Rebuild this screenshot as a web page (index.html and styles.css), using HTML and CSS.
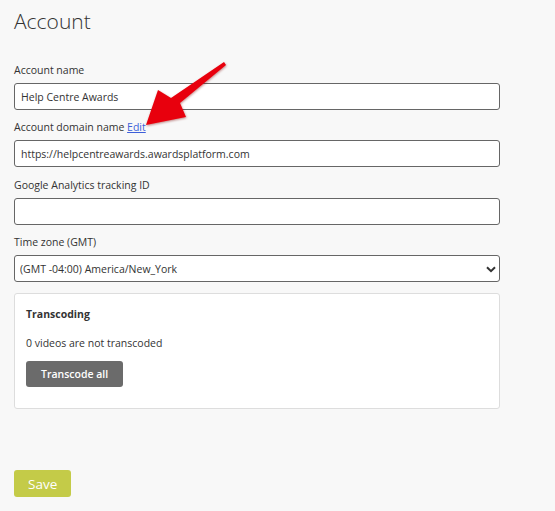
FILE: index.html
```html
<!DOCTYPE html>
<html lang="en">
<head>
  <meta charset="UTF-8" />
  <title>Account</title>
  <link rel="stylesheet" href="styles.css">
</head>
<body>
  <div class="page">
    <h1>Account</h1>

    <div class="field">
      <label for="accountName">Account name</label>
      <input id="accountName" type="text" value="Help Centre Awards">
    </div>

    <div class="field">
      <label for="domain">Account domain name <a href="#" class="edit-link">Edit</a></label>
      <input id="domain" type="text" value="https://helpcentreawards.awardsplatform.com">
    </div>

    <div class="field">
      <label for="ga">Google Analytics tracking ID</label>
      <input id="ga" type="text" value="">
    </div>

    <div class="field">
      <label for="tz">Time zone (GMT)</label>
      <div class="select-wrap">
        <select id="tz">
          <option>(GMT -04:00) America/New_York</option>
        </select>
        <svg class="chevron" width="10" height="7" viewBox="0 0 10 7">
          <path d="M1 1.2 L5 5.2 L9 1.2" fill="none" stroke="#333" stroke-width="2"/>
        </svg>
      </div>
    </div>

    <div class="panel">
      <div class="panel-title">Transcoding</div>
      <p class="panel-text">0 videos are not transcoded</p>
      <button class="btn-grey">Transcode all</button>
    </div>

    <button class="btn-save">Save</button>

    <!-- Pfeil aus dem Screenshot -->
    <svg class="arrow" width="555" height="200" viewBox="0 0 555 200">
      <defs>
        <filter id="shade" x="-20%" y="-20%" width="140%" height="140%">
          <feDropShadow dx="0.5" dy="1" stdDeviation="0.8" flood-color="#700" flood-opacity="0.45"/>
        </filter>
      </defs>
      <polygon points="224,62 226,65 180,103 186,117 146,125 158,90 171,98" fill="#e8060c" filter="url(#shade)"/>
    </svg>
  </div>
</body>
</html>
```

FILE: styles.css
```css
body {
  margin: 0;
  background: #f8f8f8;
  font-family: "Open Sans", "Liberation Sans", sans-serif;
  color: #333;
}

.page {
  position: relative;
  padding: 6px 55px 14px 14px;
}

h1 {
  margin: 0 0 26px;
  font-size: 21px;
  font-weight: 300;
  line-height: 30px;
  color: #333;
}

.field {
  margin-bottom: 9.4px;
}

.field label {
  display: block;
  font-size: 10.5px;
  line-height: 16px;
  margin-bottom: 5px;
}

.edit-link {
  color: #3d5fd9;
  text-decoration: underline;
}

.field input,
.field select {
  display: block;
  box-sizing: border-box;
  width: 100%;
  height: 27px;
  margin: 0;
  padding: 0 6px;
  border: 1px solid #666;
  border-radius: 3px;
  background: #fff;
  font-family: inherit;
  font-size: 10.5px;
  color: #333;
  outline: none;
}

.select-wrap {
  position: relative;
}

.field select {
  -webkit-appearance: none;
  appearance: none;
  padding-left: 5px;
}

.chevron {
  position: absolute;
  right: 4px;
  top: 11px;
}

.panel {
  margin-top: 11px;
  background: #fff;
  border: 1px solid #ddd;
  border-radius: 3px;
  padding: 12px 11px 21px;
}

.panel-title {
  font-size: 10.5px;
  font-weight: 700;
  line-height: 16px;
}

.panel-text {
  margin: 13px 0 10px;
  font-size: 10.5px;
  line-height: 16px;
}

.btn-grey {
  display: block;
  height: 26px;
  padding: 0 15px;
  border: none;
  border-radius: 3px;
  background: #6b6b6b;
  color: #fff;
  font-family: inherit;
  font-size: 10.5px;
  font-weight: 600;
}

.btn-save {
  display: block;
  margin-top: 61px;
  height: 27px;
  padding: 0 14px;
  border: none;
  border-radius: 3px;
  background: #c4cb48;
  color: #fff;
  font-family: inherit;
  font-size: 13.5px;
}

.arrow {
  position: absolute;
  top: 0;
  left: 0;
  pointer-events: none;
}
```
